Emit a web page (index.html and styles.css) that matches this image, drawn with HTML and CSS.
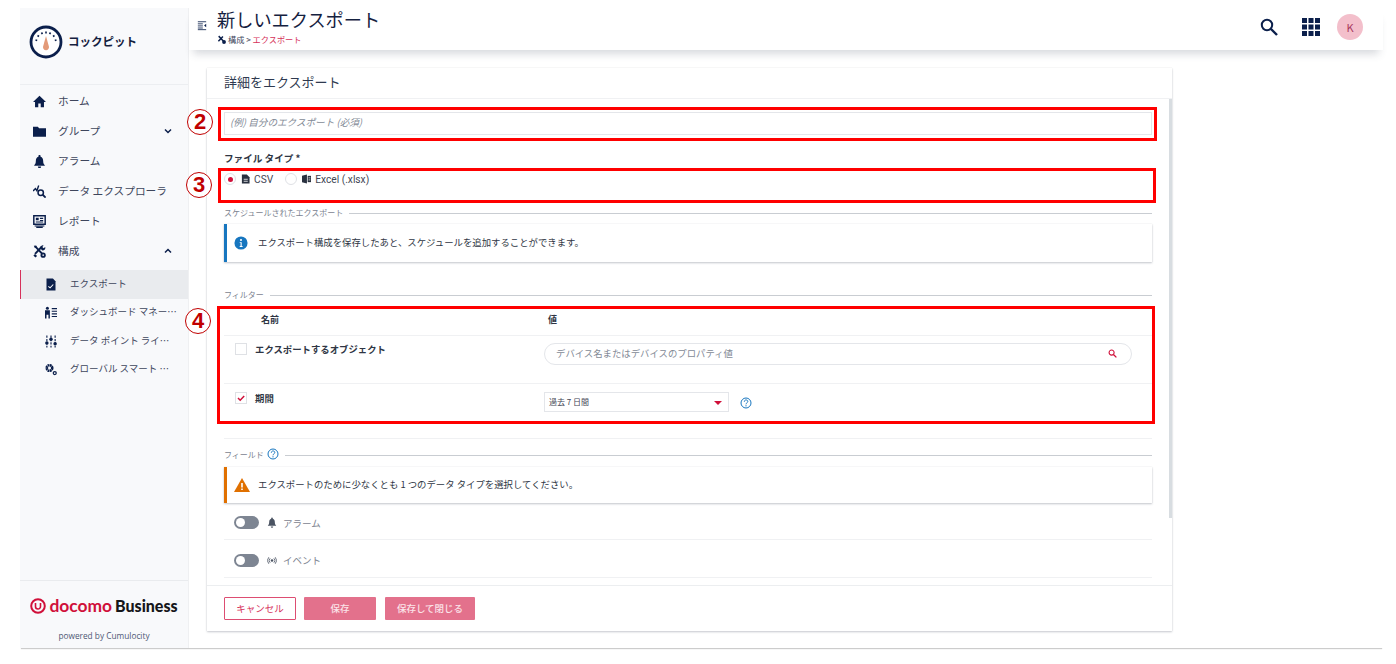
FILE: index.html
```html
<!DOCTYPE html>
<html lang="ja">
<head>
<meta charset="utf-8">
<title>新しいエクスポート</title>
<link rel="stylesheet" href="styles.css">
</head>
<body>
<div class="app">
  <aside class="sidebar">
    <div class="brand">
      <svg class="brand-icon" viewBox="0 0 34 34"><circle cx="17" cy="17" r="15" fill="#fff" stroke="#0b1f4b" stroke-width="2.8"/><path d="M6.500 15l1.700.5M8.500 10.500l1.500 1M12.500 7.500l.9 1.600M17 6.500v1.900M21.500 7.500l-.9 1.600M25.500 10.500l-1.500 1M27.500 15l-1.700.5" stroke="#0b1f4b" stroke-width="1.600"/><path d="M17 11l2.900 10.500a3 3 0 1 1-5.800 0z" fill="#e39a78"/></svg>
      <span class="brand-name">コックピット</span>
    </div>
    <nav class="nav">
      <a class="nav-item"><svg class="nav-icon" viewBox="0 0 16 16"><path d="M8 1L0 8.500h2.500V15h4v-4.500h3V15h4V8.500H16z" fill="#0b1f4b"/></svg><span>ホーム</span></a>
      <a class="nav-item"><svg class="nav-icon" viewBox="0 0 16 16"><path d="M0 2h6l1.500 2H16v10.500H0z" fill="#0b1f4b"/></svg><span>グループ</span><svg class="chev" viewBox="0 0 10 10"><path d="M2 3.500l3 3 3-3" fill="none" stroke="#0b1f4b" stroke-width="1.500"/></svg></a>
      <a class="nav-item"><svg class="nav-icon" viewBox="0 0 16 16"><path d="M8 0c-.8 0-1.300.5-1.300 1.300v.7C4.500 2.700 3.500 4.500 3.500 7c0 3.500-1 4.500-2 5.500v.7h13v-.7c-1-1-2-2-2-5.500 0-2.500-1-4.300-3.200-5v-.7C9.300.5 8.800 0 8 0zM6 14.200a2 2 0 0 0 4 0z" fill="#0b1f4b"/></svg><span>アラーム</span></a>
      <a class="nav-item"><svg class="nav-icon" viewBox="0 0 16 16"><circle cx="9.500" cy="9.500" r="3.300" fill="none" stroke="#0b1f4b" stroke-width="1.900"/><path d="M12 12l3.500 3.500" stroke="#0b1f4b" stroke-width="2.200"/><path d="M0 7.500l3-3 1.800 2.500L7 .5" fill="none" stroke="#0b1f4b" stroke-width="1.700"/></svg><span>データ エクスプローラ</span></a>
      <a class="nav-item"><svg class="nav-icon" viewBox="0 0 16 16"><path d="M1 1h14v10.500H1z" fill="none" stroke="#0b1f4b" stroke-width="1.800"/><path d="M3.500 3.500h3.500v3H3.500zM8.500 3.500h4v1.300h-4zM8.500 6h4v1.300h-4zM3.500 8h9v1.300h-9zM2 13h12v1.300H2zM4 14.500h8V16H4z" fill="#0b1f4b"/></svg><span>レポート</span></a>
      <a class="nav-item"><svg class="nav-icon" viewBox="0 0 16 16"><path d="M3 2l9 9.500" stroke="#0b1f4b" stroke-width="2.400"/><path d="M1 1l3-.5.8 2.500-2.500.8z" fill="#0b1f4b"/><circle cx="12.500" cy="12.500" r="3.200" fill="#0b1f4b"/><circle cx="12.500" cy="12.500" r="1" fill="#f8f9fb"/><path d="M10.500 2.500L2.500 11" stroke="#0b1f4b" stroke-width="2.400"/><path d="M9 4a3.200 3.200 0 0 1 4-3.500L11.500 2.500 13 4l2-1.500A3.200 3.200 0 0 1 11 6.500zM.5 13l2-2 2.500 2.500-2 2z" fill="#0b1f4b"/></svg><span>構成</span><svg class="chev" viewBox="0 0 10 10"><path d="M2 6.500l3-3 3 3" fill="none" stroke="#0b1f4b" stroke-width="1.500"/></svg></a>
      <a class="nav-sub active"><svg class="nav-icon" viewBox="0 0 16 16"><path d="M2 0h8.500L14 3.500V16H2z" fill="#0b1f4b"/><path d="M4.500 10.500l2.300 2 4.200-4.500" fill="none" stroke="#fff" stroke-width="1.400"/></svg><span>エクスポート</span></a>
      <a class="nav-sub"><svg class="nav-icon" viewBox="0 0 16 16"><path d="M0 5h6.500v11H4.600v-5H2v5H0z" fill="#0b1f4b"/><circle cx="3.200" cy="2.300" r="2" fill="#0b1f4b"/><path d="M9 2h7v1.500H9zM9 5.500h7V7H9zM9 9h7v1.500H9zM9 12.500h7V14H9z" fill="#0b1f4b"/></svg><span>ダッシュボード マネー…</span></a>
      <a class="nav-sub"><svg class="nav-icon" viewBox="0 0 16 16"><path d="M2.500 0v16M8 0v16M13.500 0v16" stroke="#0b1f4b" stroke-width="1.500" stroke-dasharray="3 1.500"/><circle cx="2.500" cy="10" r="2.300" fill="#0b1f4b"/><circle cx="8" cy="5" r="2.300" fill="#0b1f4b"/><circle cx="13.500" cy="11" r="2.300" fill="#0b1f4b"/></svg><span>データ ポイント ライ…</span></a>
      <a class="nav-sub"><svg class="nav-icon" viewBox="0 0 16 16"><circle cx="6" cy="6" r="3.700" fill="none" stroke="#0b1f4b" stroke-width="3.400" stroke-dasharray="2.300 .6"/><circle cx="13" cy="12.700" r="2" fill="none" stroke="#0b1f4b" stroke-width="1.700"/></svg><span>グローバル スマート …</span></a>
    </nav>
    <div class="side-footer">
      <div class="logo"><svg class="logo-mark" viewBox="0 0 16 16"><circle cx="8" cy="8" r="6.800" fill="none" stroke="#d0103a" stroke-width="2"/><path d="M5.500 5v3.500a2.500 2.500 0 0 0 5 0V5" fill="none" stroke="#d0103a" stroke-width="1.600"/></svg><span class="logo-docomo">docomo</span><span class="logo-business">Business</span></div>
      <div class="powered">powered by Cumulocity</div>
    </div>
  </aside>
  <main class="main">
    <header class="topbar">
      <svg class="menu-icon" viewBox="0 0 12 12"><path d="M1 1.500h10M1 4h6M1 6.500h6M1 9h6M1 11h10" stroke="#0b1f4b" stroke-width="1"/><path d="M11 4v4L8.500 6z" fill="#0b1f4b"/></svg>
      <div class="titles">
        <h1 class="title">新しいエクスポート</h1>
        <div class="crumb"><svg class="crumb-icon" viewBox="0 0 16 16"><path d="M3 2l9 9.500" stroke="#0b1f4b" stroke-width="2.600"/><circle cx="12.500" cy="12.500" r="3.400" fill="#0b1f4b"/><path d="M10.500 2.500L2.500 11" stroke="#0b1f4b" stroke-width="2.600"/></svg><span>構成 &gt; </span><span class="crumb-now">エクスポート</span></div>
      </div>
      <div class="top-actions">
        <svg class="top-icon" viewBox="0 0 18 18"><circle cx="7" cy="7" r="5.200" fill="none" stroke="#0b1f4b" stroke-width="2"/><path d="M11 11l6 6" stroke="#0b1f4b" stroke-width="2.400"/></svg>
        <svg class="top-icon" viewBox="0 0 18 18"><path d="M0 0h5v5H0zM6.500 0h5v5h-5zM13 0h5v5h-5zM0 6.500h5v5H0zM6.500 6.500h5v5h-5zM13 6.500h5v5h-5zM0 13h5v5H0zM6.500 13h5v5h-5zM13 13h5v5h-5z" fill="#0b1f4b"/></svg>
        <div class="avatar">K</div>
      </div>
    </header>
    <section class="card">
      <div class="card-head">詳細をエクスポート</div>
      <div class="card-body">
        <div class="text-input">(例) 自分のエクスポート (必須)</div>
        <div class="field-label">ファイル タイプ *</div>
        <div class="radios">
          <span class="radio on"></span>
          <svg class="small-icon" viewBox="0 0 10 10"><path d="M1 0h5.500L9.500 3v7H1z" fill="#2a3140"/><path d="M3 5.300h4.500M3 7.500h4.500" stroke="#fff" stroke-width=".9"/></svg>
          <span class="radio-text first">CSV</span>
          <span class="radio"></span>
          <svg class="small-icon" viewBox="0 0 10 10"><path d="M0 1.500L5.500 0v10L0 8.500z" fill="#2a3140"/><path d="M6.300 1.500H10v7H6.300z" fill="#2a3140"/><path d="M7.300 3.700h2M7.300 6h2" stroke="#fff" stroke-width=".8"/></svg>
          <span class="radio-text">Excel (.xlsx)</span>
        </div>
        <div class="legend legend-sched"><span>スケジュールされたエクスポート</span></div>
        <div class="alert alert-info">
          <svg class="alert-icon" viewBox="0 0 16 16"><circle cx="8" cy="8" r="7.500" fill="#1776bf"/><circle cx="8" cy="4.500" r="1.200" fill="#fff"/><path d="M6.500 7h2.300v4.500h1v1H6.500v-1h1V8h-1z" fill="#fff"/></svg>
          <span>エクスポート構成を保存したあと、スケジュールを追加することができます。</span>
        </div>
        <div class="legend legend-filter"><span>フィルター</span></div>
        <div class="filter-head"><span class="col-name">名前</span><span class="col-value">値</span></div>
        <div class="filter-row row-object">
          <span class="check"></span>
          <span class="filter-name">エクスポートするオブジェクト</span>
          <div class="search-pill"><span>デバイス名またはデバイスのプロパティ値</span><svg class="pill-icon" viewBox="0 0 10 10"><circle cx="4" cy="4" r="2.800" fill="none" stroke="#d0103a" stroke-width="1.200"/><path d="M6 6l3.300 3.300" stroke="#d0103a" stroke-width="1.500"/></svg></div>
        </div>
        <div class="filter-row row-period">
          <span class="check checked"><svg viewBox="0 0 10 10"><path d="M2 5l2.200 2.200L8.200 3" fill="none" stroke="#d0103a" stroke-width="1.500"/></svg></span>
          <span class="filter-name">期間</span>
          <div class="select"><span>過去 7 日間</span><span class="caret"></span></div>
          <svg class="help" viewBox="0 0 12 12"><circle cx="6" cy="6" r="5" fill="none" stroke="#1776bf" stroke-width="1"/><path d="M4.300 4.700c0-2.300 3.500-2.300 3.500-.2 0 1.300-1.800 1.300-1.800 2.800M6 8.200v1.200" fill="none" stroke="#1776bf" stroke-width="1"/></svg>
        </div>
        <div class="legend legend-field"><span>フィールド</span><svg class="help help-legend" viewBox="0 0 12 12"><circle cx="6" cy="6" r="5" fill="none" stroke="#1776bf" stroke-width="1"/><path d="M4.300 4.700c0-2.300 3.500-2.300 3.500-.2 0 1.300-1.800 1.300-1.800 2.800M6 8.200v1.200" fill="none" stroke="#1776bf" stroke-width="1"/></svg></div>
        <div class="alert alert-warn">
          <svg class="alert-icon warn-icon" viewBox="0 0 16 14"><path d="M8 0l8 14H0z" fill="#e07000"/><path d="M7.200 5h1.600v4.500H7.200zM7.200 10.500h1.600V12H7.200z" fill="#fff"/></svg>
          <span>エクスポートのために少なくとも 1 つのデータ タイプを選択してください。</span>
        </div>
        <div class="toggle-row">
          <span class="toggle"></span>
          <svg class="toggle-icon" viewBox="0 0 16 16"><path d="M8 0c-.8 0-1.300.5-1.300 1.300v.7C4.500 2.700 3.500 4.500 3.500 7c0 3.500-1 4.500-2 5.500v.7h13v-.7c-1-1-2-2-2-5.500 0-2.500-1-4.300-3.200-5v-.7C9.300.5 8.800 0 8 0zM6 14.200a2 2 0 0 0 4 0z" fill="#4a5362"/></svg>
          <span>アラーム</span>
        </div>
        <div class="toggle-row">
          <span class="toggle"></span>
          <svg class="toggle-icon" viewBox="0 0 16 16"><circle cx="8" cy="8" r="2" fill="#4a5362"/><path d="M5 4.500a5 5 0 0 0 0 7M11 4.500a5 5 0 0 1 0 7M2.800 2.800a8 8 0 0 0 0 10.400M13.200 2.800a8 8 0 0 1 0 10.400" fill="none" stroke="#4a5362" stroke-width="1.300"/></svg>
          <span>イベント</span>
        </div>
      </div>
      <div class="scrollbar"></div>
      <div class="card-foot">
        <button class="btn btn-outline">キャンセル</button>
        <button class="btn btn-fill btn-save">保存</button>
        <button class="btn btn-fill btn-close">保存して閉じる</button>
      </div>
    </section>
  </main>
</div>
<div class="mark box-2"></div>
<div class="mark box-3"></div>
<div class="mark box-4"></div>
<div class="num num-2">2</div>
<div class="num num-3">3</div>
<div class="num num-4">4</div>
</body>
</html>
```

FILE: styles.css
```css
* { box-sizing: border-box; }
html, body { margin: 0; height: 100%; }
body {
  position: relative;
  background: #fff;
  overflow: hidden;
  font-family: "Noto Sans CJK JP", "Noto Sans", sans-serif;
  color: #2f3644;
  font-size: 10px;
}
svg { display: block; flex: none; }

.app {
  display: flex;
  width: 1363px;
  height: 640px;
  margin: 8px 0 0 20px;
  box-shadow: 0 2px 1px -1px rgba(0, 0, 0, .2);
}

/* Sidebar */
.sidebar {
  width: 169px;
  flex: none;
  display: flex;
  flex-direction: column;
  background: #f8f9fb;
  border-right: 1px solid #eff0f2;
}
.brand {
  height: 77px;
  display: flex;
  align-items: center;
  gap: 5px;
  padding: 0 0 8px 9px;
  border-bottom: 1px solid #eceef1;
}
.brand-icon { width: 34px; height: 34px; }
.brand-name { font-size: 11.5px; font-weight: 700; color: #15213f; margin-top: -2px; }
.nav { flex: 1; padding-top: 1px; }
.nav-item, .nav-sub {
  display: flex;
  align-items: center;
  color: #3e465c;
  white-space: nowrap;
}
.nav-item span { margin-top: -2px; }
.nav-sub span { margin-top: -3px; }
.nav-item { height: 30px; padding-left: 13px; font-size: 10.7px; }
.nav-item .nav-icon { width: 13px; height: 13px; margin-right: 12px; }
.nav-item:nth-child(6) { margin-bottom: 4px; }
.nav-sub { height: 28.5px; padding-left: 25px; font-size: 9.5px; }
.nav-sub .nav-icon { width: 12px; height: 13px; margin-right: 13px; }
.nav-sub.active { background: #e9ebee; box-shadow: inset 1px 0 0 #d6315a; }
.chev { width: 10px; height: 10px; margin-left: auto; margin-right: 15px; }
.side-footer {
  height: 68px;
  border-top: 1px solid #e9ebee;
  display: flex;
  flex-direction: column;
  align-items: center;
}
.logo { display: flex; align-items: center; height: 48px; padding-top: 1px; }
.logo-mark { width: 16px; height: 16px; margin-right: 3px; }
.logo-docomo { font-family: "Lato", sans-serif; font-size: 17.4px; font-weight: 700; color: #d0103a; margin-right: 3px; }
.logo-business { font-family: "Lato", sans-serif; font-size: 16px; font-weight: 900; color: #15161a; }
.powered { font-family: "Open Sans", sans-serif; font-size: 8.3px; color: #4e5874; margin-top: 1px; }

/* Main */
.main { flex: 1; min-width: 0; }
.topbar {
  height: 42px;
  display: flex;
  align-items: flex-start;
  padding-left: 8px;
  background: #fff;
  box-shadow: 0 8px 8px -4px rgba(60, 70, 90, .2);
  position: relative;
}
.menu-icon { width: 10px; height: 11px; margin-top: 12px; margin-right: 10px; }
.titles { flex: 1; }
.title { margin: 0; font-size: 18.2px; font-weight: 400; line-height: 23px; color: #15213f; }
.crumb { display: flex; align-items: center; font-size: 8.2px; line-height: 12px; color: #3e465c; margin-top: 2px; }
.crumb span { white-space: pre; }
.crumb-icon { width: 9px; height: 9px; margin-right: 2px; }
.crumb-now { color: #d6315a; }
.top-actions { display: flex; align-items: center; padding-top: 6px; padding-right: 20px; }
.top-icon { width: 18px; height: 18px; margin-right: 24px; }
.top-icon:nth-child(2) { margin-right: 17px; }
.avatar {
  width: 26px;
  height: 26px;
  border-radius: 50%;
  background: #f3bfcb;
  color: #a8365c;
  font-size: 11px;
  display: flex;
  align-items: center;
  justify-content: center;
}

/* Card */
.card {
  position: relative;
  width: 965px;
  height: 563px;
  margin: 18px 0 0 18px;
  display: flex;
  flex-direction: column;
  background: #fff;
  box-shadow: 0 1px 2px rgba(60, 70, 90, .28), 0 0 1px rgba(60, 70, 90, .12);
}
.card-head {
  height: 31px;
  flex: none;
  padding-left: 17px;
  font-size: 13px;
  line-height: 28px;
  color: #2f3a50;
  border-bottom: 1px solid #f0f1f3;
}
.card-body {
  flex: 1;
  min-height: 0;
  overflow: hidden;
  padding: 0 20px 0 17px;
}
.scrollbar {
  position: absolute;
  top: 31px;
  right: 0;
  width: 3px;
  height: 419px;
  background: #d8dde1;
}
.card-foot {
  height: 46px;
  flex: none;
  display: flex;
  padding: 11px 0 0 17px;
  border-top: 1px solid #eceef0;
}
.text-input {
  height: 23px;
  margin-top: 13px;
  padding-left: 5px;
  border: 1px solid #e4e6ea;
  font-size: 9.6px;
  font-style: italic;
  line-height: 19px;
  color: #838a96;
}
.field-label { margin-top: 16px; font-size: 9.6px; font-weight: 700; line-height: 14px; color: #2f3644; }
.radios { display: flex; align-items: center; height: 14px; margin-top: 7px; font-family: "Roboto", sans-serif; font-size: 10.2px; color: #3f4654; }
.radio { width: 12px; height: 12px; border: 1px solid #dfe1e5; border-radius: 50%; position: relative; background: #fff; }
.radio.on::after { content: ""; position: absolute; left: 2.500px; top: 2.500px; width: 5px; height: 5px; border-radius: 50%; background: #d0103a; }
.small-icon { width: 9px; height: 10px; margin: 0 4px 0 5px; }
.radio-text.first { margin-right: 12px; }
.legend {
  display: flex;
  align-items: center;
  height: 14px;
  font-size: 8px;
  color: #7c8390;
}
.legend span { margin-top: -2px; }
.legend::after { content: ""; flex: 1; height: 1px; background: #c9cdd2; margin-left: 6px; }
.legend-sched { margin-top: 20px; }
.legend-filter { margin-top: 26px; }
.legend-field { margin-top: 9px; }
.alert {
  display: flex;
  align-items: center;
  padding-left: 7px;
  font-size: 9.4px;
  color: #2f3644;
  box-shadow: 0 1px 2px rgba(60, 70, 90, .3), 0 0 1px rgba(60, 70, 90, .12);
}
.alert span { margin-top: -2px; }
.alert-info { height: 38px; margin-top: 4px; border-left: 3px solid #1776bf; }
.alert-warn { height: 36px; margin-top: 5px; border-left: 3px solid #e07000; }
.alert-icon { width: 14px; height: 14px; margin-right: 10px; }
.warn-icon { width: 16px; height: 14px; margin-right: 8px; }
.filter-head {
  height: 31px;
  margin-top: 3px;
  display: flex;
  align-items: center;
  font-size: 9px;
  font-weight: 700;
  border-bottom: 1px solid #f0f1f3;
}
.filter-head span { margin-top: -2px; }
.col-name { margin-left: 37px; width: 287px; }
.filter-row { display: flex; align-items: flex-start; border-bottom: 1px solid #f0f1f3; }
.row-object { height: 48px; padding-top: 7px; }
.row-period { height: 55px; padding-top: 8px; }
.check {
  width: 12px;
  height: 12px;
  margin-left: 11px;
  margin-right: 8px;
  border: 1px solid #dfe1e5;
  background: #fff;
}
.check svg { width: 10px; height: 10px; }
.filter-name { width: 289px; font-size: 9.4px; font-weight: 700; line-height: 12px; color: #2f3644; }
.search-pill {
  width: 588px;
  height: 22px;
  display: flex;
  align-items: center;
  justify-content: space-between;
  padding: 0 14px 0 11px;
  border: 1px solid #e4e6ea;
  border-radius: 11px;
  font-size: 9.4px;
  color: #838a96;
}
.search-pill span { margin-top: -2px; }
.pill-icon { width: 9px; height: 9px; margin-top: -2px; }
.select {
  width: 185px;
  height: 20px;
  display: flex;
  align-items: center;
  justify-content: space-between;
  padding: 0 6px 0 4px;
  border: 1px solid #e4e6ea;
  font-size: 8px;
  color: #3f4654;
}
.select span:first-child { margin-top: -1px; }
.caret { width: 0; height: 0; margin-top: 2px; border: 4.500px solid transparent; border-top: 4.500px solid #d0103a; border-bottom: 0; }
.help { width: 12px; height: 12px; }
.row-period .help { margin: 5px 0 0 11px; }
.help-legend { margin: -2px 0 0 3px; }
.toggle-row {
  display: flex;
  align-items: center;
  color: #7c8390;
  font-size: 9.5px;
  border-bottom: 1px solid #f0f1f3;
  padding: 3px 0 0 10px;
}
.toggle-row:nth-last-child(2) { height: 37px; }
.toggle-row:last-child { height: 38px; }
.toggle { width: 25px; height: 13px; border-radius: 7px; background: #7d8592; position: relative; margin-right: 8px; }
.toggle::after { content: ""; position: absolute; left: 2px; top: 2px; width: 9px; height: 9px; border-radius: 50%; background: #fff; }
.toggle-icon { width: 10px; height: 11px; margin-right: 6px; }
.btn {
  height: 23px;
  padding: 0;
  border-radius: 1px;
  font-family: inherit;
  font-size: 9.5px;
  line-height: 1;
}
.btn-outline { width: 72px; margin-right: 8px; background: #fff; color: #d6315a; border: 1px solid #dd4d72; }
.btn-fill { background: #e3718c; color: #fbe3e9; border: 0; font-weight: 500; }
.btn-save { width: 72px; margin-right: 9px; }
.btn-close { width: 90px; }

/* Annotations drawn over the screenshot */
.mark { position: absolute; border: 3px solid #f00; }
.box-2 { left: 218px; top: 107px; width: 939px; height: 34px; }
.box-3 { left: 218px; top: 168px; width: 938px; height: 35px; }
.box-4 { left: 217px; top: 306px; width: 938px; height: 118px; }
.num {
  position: absolute;
  width: 26px;
  height: 26px;
  border: 1px solid #c00000;
  border-radius: 50%;
  color: #c00000;
  background: #fff;
  font-family: "Liberation Sans", sans-serif;
  font-size: 22px;
  font-weight: 700;
  line-height: 24px;
  text-align: center;
}
.num-2 { left: 187px; top: 109px; }
.num-3 { left: 186px; top: 172px; }
.num-4 { left: 185px; top: 308px; }
```
